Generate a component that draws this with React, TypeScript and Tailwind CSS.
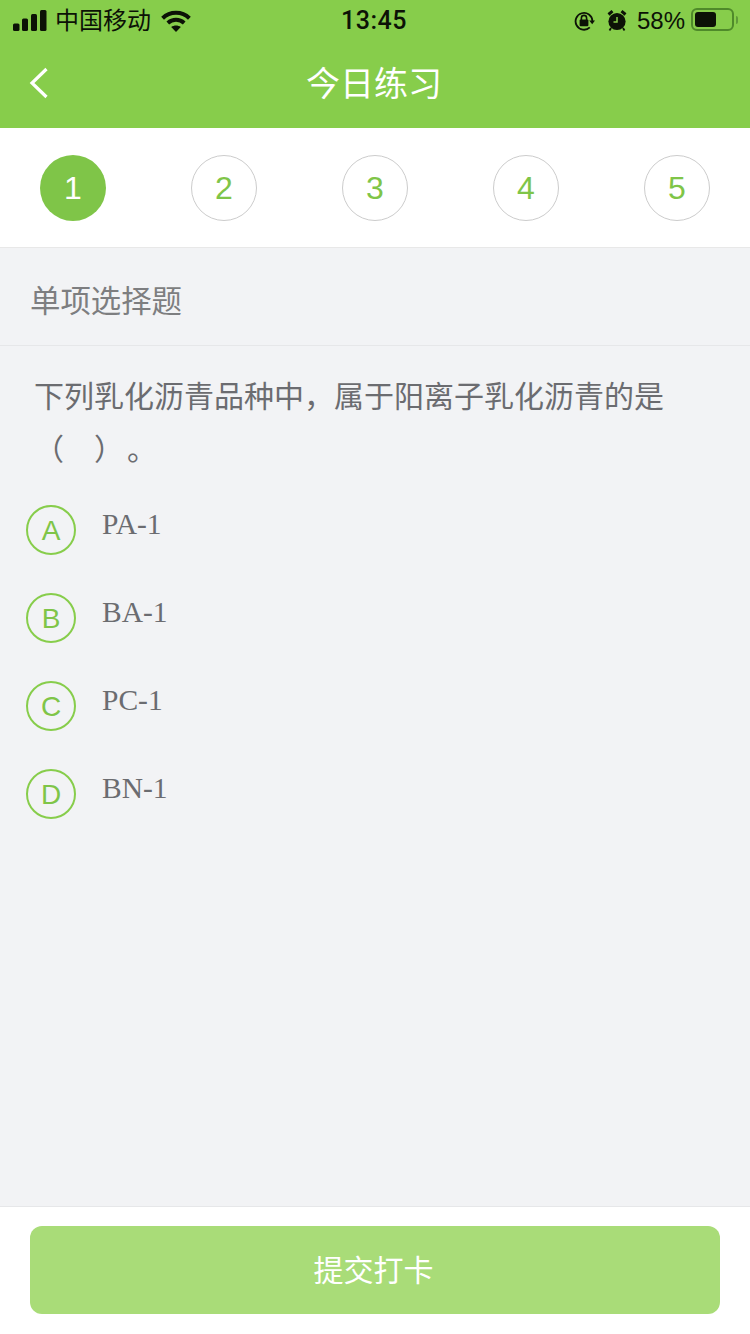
const CJK = "font-['Roboto','Noto_Sans_CJK_SC',sans-serif]";

function Signal() {
  return (
    <svg width="34" height="21" viewBox="0 0 34 21" fill="#0c1206">
      <rect x="0" y="13.5" width="6.5" height="7.5" rx="1.5" />
      <rect x="9" y="8.5" width="6" height="12.5" rx="1.5" />
      <rect x="18" y="4" width="6" height="17" rx="1.5" />
      <rect x="27" y="0" width="6.5" height="21" rx="1.5" />
    </svg>
  );
}

function Wifi() {
  return (
    <svg width="30" height="22" viewBox="0 0 30 22" fill="none" stroke="#0c1206" strokeWidth="4">
      <path d="M1.6 8.2 C9 1 21 1 28.4 8.2" />
      <path d="M6.8 13 C11.5 8.8 18.5 8.8 23.2 13" />
      <path d="M15 22 L10.2 17 C13 15 17 15 19.8 17 Z" fill="#0c1206" stroke="none" />
    </svg>
  );
}

function RotationLock() {
  return (
    <svg width="21" height="20" viewBox="0 0 21 20" fill="none">
      <path d="M18.4 10 A8.4 8.4 0 1 0 15.8 16.4" stroke="#0c1206" strokeWidth="1.8" />
      <path d="M15.2 9.5 L21 9.5 L18.2 13.2 Z" fill="#0c1206" />
      <rect x="5.6" y="8.4" width="8.8" height="6.8" rx="1" fill="#0c1206" />
      <path d="M7.4 9 V7 A2.6 2.6 0 0 1 12.6 7 V9" stroke="#0c1206" strokeWidth="1.6" />
    </svg>
  );
}

function Alarm() {
  return (
    <svg width="20" height="21" viewBox="0 0 20 21" fill="none">
      <circle cx="10" cy="11.5" r="8.6" fill="#0c1206" />
      <path d="M10 7 V12 H6.5" stroke="#87cd4b" strokeWidth="1.5" />
      <path d="M1.5 4.5 L5.5 1.2 M18.5 4.5 L14.5 1.2" stroke="#0c1206" strokeWidth="3" />
      <path d="M4 18 L2.5 20.5 M16 18 L17.5 20.5" stroke="#0c1206" strokeWidth="1.8" />
    </svg>
  );
}

function Battery() {
  return (
    <div className="flex items-center -mt-[2px]">
      <div className="w-[43px] h-[23px] rounded-[6px] border-2 border-[#4f8a2a] p-[2px]">
        <div className="w-[21px] h-full rounded-[3px] bg-[#0c1206]" />
      </div>
      <div className="ml-[2px] w-[2px] h-[8px] rounded-r-sm bg-[#5f9a38]" />
    </div>
  );
}

function StatusBar() {
  return (
    <div className="relative h-[40px] flex items-center justify-between pl-[13px] pr-[12px] pt-[1px] text-[#0c1206]">
      <div className="flex items-center">
        <Signal />
        <span className="ml-[8px] text-[24px] leading-none">中国移动</span>
        <span className="ml-[10px]"><Wifi /></span>
      </div>
      <span className="absolute left-[341px] top-[7px] text-[25px] leading-[28px] font-medium font-['Roboto',sans-serif] tracking-[0.5px]">13:45</span>
      <div className="flex items-center">
        <RotationLock />
        <span className="ml-[12px]"><Alarm /></span>
        <span className="ml-[10px] mr-[6px] text-[24px] leading-none font-['Liberation_Sans',sans-serif]">58%</span>
        <Battery />
      </div>
    </div>
  );
}

function Header() {
  return (
    <header className="bg-[#87cd4b]">
      <StatusBar />
      <div className="relative h-[88px] flex items-center justify-center pr-[2px]">
        <svg className="absolute left-[29px] top-[27px]" width="20" height="32" viewBox="0 0 20 32" fill="none" stroke="#fff" strokeWidth="3.2">
          <path d="M17.5 2 L3 16 L17.5 30" />
        </svg>
        <h1 className="text-[34px] leading-none text-white font-normal">今日练习</h1>
      </div>
    </header>
  );
}

function Steps() {
  return (
    <div className="h-[120px] bg-white border-b border-[#e8e8e8] flex justify-between px-[40px] pt-[27px]">
      {[1, 2, 3, 4, 5].map((n) => (
        <div
          key={n}
          className={
            n === 1
              ? "w-[66px] h-[66px] rounded-full bg-[#7fc548] text-white flex items-center justify-center text-[32px] font-['Liberation_Sans',sans-serif]"
              : "w-[66px] h-[66px] rounded-full border border-[#cccccc] text-[#7fc548] flex items-center justify-center text-[32px] font-['Liberation_Sans',sans-serif]"
          }
        >
          {n}
        </div>
      ))}
    </div>
  );
}

function Option({ letter, text }: { letter: string; text: string }) {
  return (
    <div className="h-[88px] flex items-start pl-[26px]">
      <div className="w-[50px] h-[50px] rounded-full border-2 border-[#87cd4b] text-[#7fc548] flex items-center justify-center text-[28px] pt-[2px] font-['Liberation_Sans',sans-serif]">
        {letter}
      </div>
      <span className="ml-[26px] -mt-[3px] text-[29.5px] leading-[44px] text-[#6b6c70] font-['Liberation_Serif',serif]">{text}</span>
    </div>
  );
}

export default function App() {
  return (
    <div className={`w-[750px] h-[1334px] flex flex-col bg-[#f2f3f5] overflow-hidden ${CJK}`}>
      <Header />
      <Steps />
      <div className="h-[98px] border-b border-[#e6e7e9] flex items-center pl-[30px] pt-[12px] text-[30.4px] leading-none text-[#7d7e80]">
        单项选择题
      </div>
      <main className="flex-1">
        <p className="ml-[34px] mr-[35px] mt-[24px] text-[30px] leading-[53px] text-[#6b6c70]">
          {"下列乳化沥青品种中，属于阳离子乳化沥青的是（　）\u200A。"}
        </p>
        <div className="mt-[29px]">
          <Option letter="A" text="PA-1" />
          <Option letter="B" text="BA-1" />
          <Option letter="C" text="PC-1" />
          <Option letter="D" text="BN-1" />
        </div>
      </main>
      <footer className="h-[128px] bg-white border-t border-[#e6e7e9] px-[30px] pt-[19px]">
        <button className="w-full h-[88px] rounded-[12px] bg-[#a9dc78] text-white text-[30px] flex items-center justify-center pr-[3px]">
          提交打卡
        </button>
      </footer>
    </div>
  );
}
